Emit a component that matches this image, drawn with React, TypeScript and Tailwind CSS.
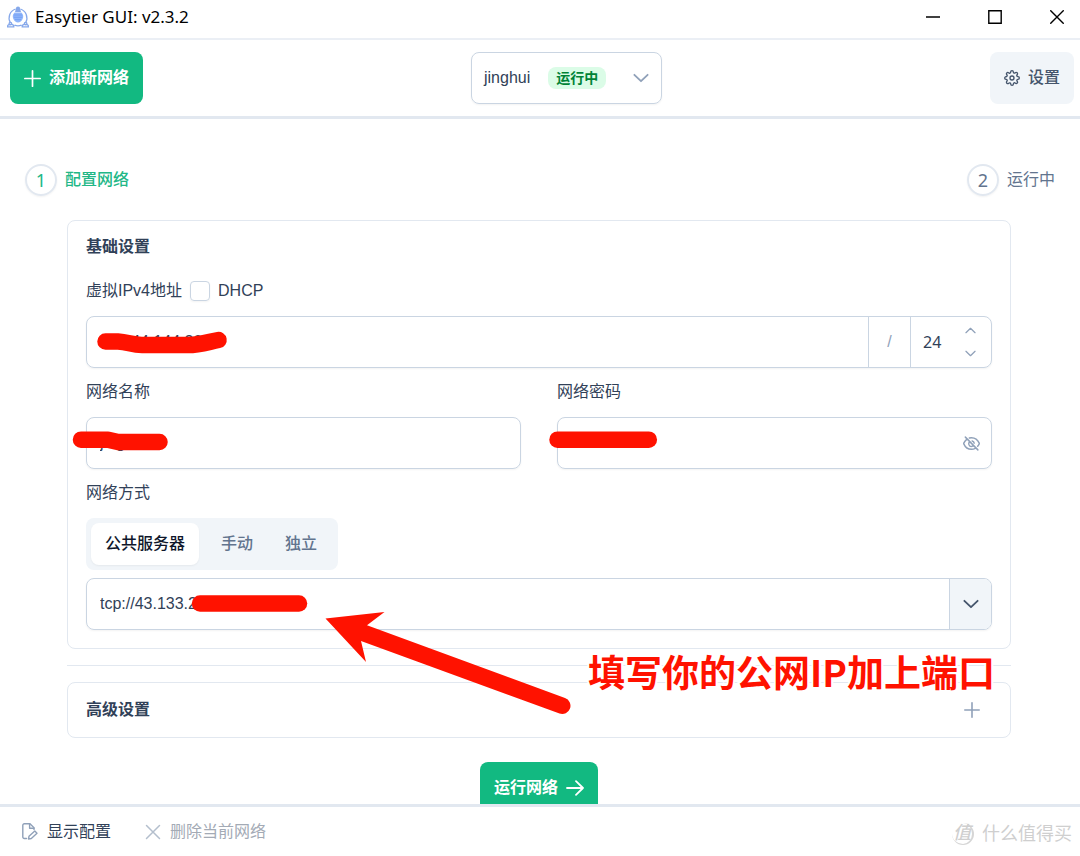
import { useState } from "react";
import type { ReactNode } from "react";
import { FiSettings } from "react-icons/fi";

type Mode = "public" | "manual" | "standalone";

const modes: { id: Mode; label: string }[] = [
  { id: "public", label: "公共服务器" },
  { id: "manual", label: "手动" },
  { id: "standalone", label: "独立" },
];

function Chevron({ className, up = false }: { className: string; up?: boolean }) {
  return (
    <svg viewBox="0 0 14 14" className={className} fill="none" stroke="currentColor" strokeWidth="1.6" strokeLinecap="round" strokeLinejoin="round">
      <path d={up ? "M1.2 9.8 7 4.2l5.8 5.6" : "M1.2 4.2 7 9.8l5.8-5.6"} />
    </svg>
  );
}

function PlusIcon({ className }: { className: string }) {
  return (
    <svg viewBox="0 0 16 16" className={className} fill="none" stroke="currentColor" strokeWidth="1.6" strokeLinecap="round">
      <path d="M8 .8v14.4M.8 8h14.4" />
    </svg>
  );
}

function EyeSlashIcon() {
  return (
    <svg viewBox="0 0 16 16" className="size-[17px]" fill="none" stroke="currentColor" strokeWidth="1.4" strokeLinecap="round" strokeLinejoin="round">
      <path d="M6 2.8c.6-.2 1.3-.3 2-.3 3.5 0 6.2 2.7 7.4 5.5-.4.9-.9 1.8-1.6 2.6M11.6 12.5c-1.1.6-2.3 1-3.6 1-3.5 0-6.200-2.700-7.400-5.500.6-1.400 1.600-2.800 2.900-3.800" />
      <path d="M2.200 2 14 14M5.600 7.200A2.500 2.500 0 0 0 9 10.500M8.600 5.600a2.500 2.500 0 0 1 1.900 2.100" />
    </svg>
  );
}

function FileEditIcon() {
  return (
    <svg viewBox="0 0 16 17" className="h-[17px] w-4" fill="none" stroke="currentColor" strokeWidth="1.4" strokeLinecap="round" strokeLinejoin="round">
      <path d="M4.500 15.500H2.300A1.500 1.500 0 0 1 .8 14V2.300A1.500 1.500 0 0 1 2.300.8H8l4 4v1.800" />
      <path d="M7.600 1v4.200H12" />
      <path d="m7 13.300 5.800-5.200 2.200 2.200-5.700 5.200-2.800.5z" />
    </svg>
  );
}

function AppLogo() {
  return (
    <svg viewBox="0 0 22 22" className="size-[22px]" fill="none" stroke="#86a8ea" strokeWidth="1.3">
      <path d="M3.300 16.500A9.400 9.400 0 0 1 8.600 3M13.400 3a9.400 9.400 0 0 1 5.300 13.500" />
      <path d="M11 .4a2 2 0 0 1 2 2.200l1 3.400H8l1-3.400A2 2 0 0 1 11 .4z" fill="#86a8ea" stroke="none" />
      <path d="M7.600 6.500h6.800a5.600 5.600 0 0 1 1.200 6.500c-1 2.200-2.600 3.400-4.600 3.600-2-.2-3.600-1.400-4.600-3.600a5.600 5.600 0 0 1 1.200-6.500z" fill="#8fb5fb" stroke="none" />
      <path d="M7 9h8M7 11.300h8M8 13.600h6" stroke="#6f9cf2" strokeWidth=".8" />
      <circle cx="3.400" cy="17.600" r="1.300" />
      <circle cx="18.600" cy="17.600" r="1.300" />
      <path d="M.5 20.800h6.300c0-1.500-1.200-2.400-2.400-2.400H2.900C1.700 18.400.5 19.300.5 20.800zM15.200 20.800h6.300c0-1.500-1.200-2.400-2.400-2.400h-1.500c-1.200 0-2.400.9-2.400 2.400zM7.500 19.200c2.300.9 4.700.9 7 0" />
    </svg>
  );
}

function Step({ index, active = false, children }: { index: number; active?: boolean; children: ReactNode }) {
  return (
    <li className={`flex items-center gap-2 ${active ? "font-medium text-[#22b787]" : "text-slate-500"}`}>
      <span className="flex size-8 items-center justify-center rounded-full border-2 border-slate-200 font-['Noto_Sans','Noto_Sans_CJK_SC',sans-serif] text-lg leading-6 font-normal shadow-xs">
        {index}
      </span>
      {children}
    </li>
  );
}

// Hand-drawn redactions and the arrow that points at the server address
function Markup() {
  return (
    <div className="pointer-events-none absolute top-0 left-0">
      <svg width="1080" height="856" viewBox="0 0 1080 856" fill="none" stroke="#ff1200" strokeWidth="16.500" strokeLinecap="round" strokeLinejoin="round">
        <path d="M105.500 341.500H118C128 342 132 345 142 345H188C200 345 208 342 218.500 340" />
        <path d="M81 439.700H108L118 442H159.500" />
        <path d="M557.500 439.700H648.800" />
        <path d="M200 603.500H299" />
        <path d="M325.500 618.500 384.500 612 367 625.200 565 698A8.200 8.200 0 0 1 559.500 713.500L361 641 366 662z" fill="#ff1200" stroke="none" />
      </svg>
      <p className="absolute top-[644px] left-[588px] font-['Noto_Sans_CJK_SC',sans-serif] text-[37px] leading-[54px] font-bold whitespace-nowrap text-[#ff1200] [-webkit-text-stroke:4px_white] [paint-order:stroke_fill]">
        填写你的公网IP加上端口
      </p>
    </div>
  );
}

export default function App() {
  const [mode, setMode] = useState<Mode>("public");
  const [dhcp, setDhcp] = useState(false);
  const [address, setAddress] = useState("10.144.144.20");
  const [mask, setMask] = useState("24");
  const [name, setName] = useState("jinghui");
  const [password, setPassword] = useState("");
  const [server, setServer] = useState("tcp://43.133.2");

  return (
    <div className="relative flex h-screen flex-col overflow-hidden bg-white font-['Liberation_Sans','Noto_Sans_CJK_SC',sans-serif] text-base text-slate-700">
      <header className="flex h-[38px] shrink-0 items-center justify-between pr-4 pb-1 pl-[7px] text-black">
        <div className="flex items-center gap-1.5">
          <AppLogo />
          <h1 className="font-['Noto_Sans',sans-serif] text-[17px] leading-6">Easytier GUI: v2.3.2</h1>
        </div>
        <div className="flex items-center gap-12">
          <button aria-label="最小化" className="flex size-[14px] items-center justify-center">
            <svg viewBox="0 0 14 14" className="size-[14px]" stroke="currentColor" strokeWidth="1.5"><path d="M0 7h14" /></svg>
          </button>
          <button aria-label="最大化" className="flex size-[14px] items-center justify-center">
            <svg viewBox="0 0 14 14" className="size-[14px]" fill="none" stroke="currentColor" strokeWidth="1.4"><path d="M.8.8h12.4v12.4H.8z" /></svg>
          </button>
          <button aria-label="关闭" className="flex size-[14px] items-center justify-center">
            <svg viewBox="0 0 14 14" className="size-[14px]" stroke="currentColor" strokeWidth="1.4"><path d="M.3.3l13.4 13.4M13.7.3.3 13.7" /></svg>
          </button>
        </div>
      </header>

      <div className="flex shrink-0 items-center justify-between border-t-2 border-b-3 border-t-[#ebeff5] border-b-slate-200 py-3 pr-[6px] pl-[10px]">
        <button className="flex h-[52px] items-center gap-2 rounded-lg bg-[#12b981] px-[14px] font-bold text-white">
          <PlusIcon className="size-[17px]" />
          添加新网络
        </button>
        <button aria-haspopup="listbox" className="flex h-[52px] w-[191px] items-center rounded-lg border border-slate-300 px-3 shadow-xs">
          <span>jinghui</span>
          <span className="ml-[18px] rounded-lg bg-green-100 px-2 text-sm leading-[22px] font-bold text-green-700">运行中</span>
          <Chevron className="ml-auto size-4 text-slate-400" />
        </button>
        <button className="flex h-[52px] items-center gap-2 rounded-lg bg-slate-100 px-[14px] font-medium text-slate-600">
          <FiSettings className="size-4" />
          设置
        </button>
      </div>

      <main className="min-h-0 flex-1 overflow-hidden px-[25px] pt-[45px]">
        <ol className="flex items-center justify-between">
          <Step index={1} active>配置网络</Step>
          <Step index={2}>运行中</Step>
        </ol>

        <div className="mt-6 mr-11 ml-[42px]">
          <section className="rounded-lg border border-slate-200 p-[18px]">
            <h2 className="h-4 leading-4 font-bold">基础设置</h2>

            <div className="mt-6 flex h-6 items-center gap-2">
              <label htmlFor="address">虚拟IPv4地址</label>
              <input
                id="dhcp"
                type="checkbox"
                checked={dhcp}
                onChange={e => setDhcp(e.target.checked)}
                className="size-5 appearance-none rounded border border-slate-300 shadow-xs checked:bg-emerald-500"
              />
              <label htmlFor="dhcp">DHCP</label>
            </div>
            <div className="mt-[13px] flex h-[52px] rounded-lg border border-slate-300 shadow-xs">
              <input id="address" value={address} onChange={e => setAddress(e.target.value)} className="min-w-0 flex-1 px-[13px] outline-none" />
              <span className="flex w-[43px] items-center justify-center border-x border-slate-300 text-slate-400">/</span>
              <input
                aria-label="子网掩码"
                value={mask}
                onChange={e => setMask(e.target.value)}
                className="w-[50px] pl-3 font-['Noto_Sans',sans-serif] outline-none"
              />
              <div className="flex w-[30px] flex-col items-start justify-center gap-3 pl-1 text-slate-400">
                <button aria-label="增加" onClick={() => setMask(String(Number(mask) + 1))}><Chevron up className="size-[11px]" /></button>
                <button aria-label="减少" onClick={() => setMask(String(Number(mask) - 1))}><Chevron className="size-[11px]" /></button>
              </div>
            </div>

            <div className="mt-3 grid grid-cols-2 gap-9">
              <div className="flex flex-col gap-[13px]">
                <label htmlFor="name" className="leading-6">网络名称</label>
                <input
                  id="name"
                  value={name}
                  onChange={e => setName(e.target.value)}
                  className="h-[52px] w-full rounded-lg border border-slate-300 px-[13px] shadow-xs outline-none"
                />
              </div>
              <div className="flex flex-col gap-[13px]">
                <label htmlFor="password" className="leading-6">网络密码</label>
                <div className="flex h-[52px] items-center rounded-lg border border-slate-300 pr-[11px] shadow-xs">
                  <input
                    id="password"
                    type="password"
                    value={password}
                    onChange={e => setPassword(e.target.value)}
                    className="min-w-0 flex-1 px-[13px] outline-none"
                  />
                  <button aria-label="显示密码" className="text-slate-400"><EyeSlashIcon /></button>
                </div>
              </div>
            </div>

            <h3 className="mt-3 leading-6">网络方式</h3>
            <div className="mt-[13px] flex h-[52px] w-fit rounded-lg bg-slate-100 p-[5px]">
              {modes.map(item => (
                <button
                  key={item.id}
                  onClick={() => setMode(item.id)}
                  className={mode === item.id ? "mr-1.5 rounded-lg bg-white px-[14px] font-medium text-slate-900 shadow-xs" : "px-4 font-medium text-slate-500"}
                >
                  {item.label}
                </button>
              ))}
            </div>
            <div className="mt-2 flex h-[52px] overflow-hidden rounded-lg border border-slate-300 shadow-xs">
              <input
                aria-label="公共服务器地址"
                value={server}
                onChange={e => setServer(e.target.value)}
                className="min-w-0 flex-1 px-[13px] outline-none"
              />
              <button aria-label="选择服务器" className="flex w-[42px] items-center justify-center border-l border-slate-300 bg-slate-100 text-slate-600">
                <Chevron className="size-4" />
              </button>
            </div>
          </section>

          <hr className="my-4 border-slate-200" />

          <section className="rounded-lg border border-slate-200">
            <h2>
              <button className="flex h-[54px] w-full items-center justify-between pr-[30px] pl-[18px] font-bold">
                高级设置
                <PlusIcon className="size-4 text-slate-400" />
              </button>
            </h2>
          </section>

          <div className="mt-6 flex justify-center">
            <button className="flex h-[52px] items-center gap-2 rounded-lg bg-[#12b981] px-[14px] font-bold text-white">
              运行网络
              <svg viewBox="0 0 18 16" className="h-4 w-[18px]" fill="none" stroke="currentColor" strokeWidth="1.8" strokeLinecap="round" strokeLinejoin="round">
                <path d="M1 8h16M10 1.200 17 8l-7 6.800" />
              </svg>
            </button>
          </div>
        </div>
      </main>

      <footer className="flex h-[52px] shrink-0 items-center border-t-3 border-slate-200 pr-2 pl-[22px]">
        <button className="flex items-center gap-[9px]">
          <span className="text-slate-400"><FileEditIcon /></span>
          显示配置
        </button>
        <button disabled className="ml-[34px] flex items-center gap-[9px] text-[#a3aab5]">
          <svg viewBox="0 0 16 16" className="size-4 text-[#b4bfcd]" stroke="currentColor" strokeWidth="1.5" strokeLinecap="round">
            <path d="m1.500 1.500 13 13M14.500 1.500l-13 13" />
          </svg>
          删除当前网络
        </button>
        <div className="ml-auto flex items-center gap-2 pt-1 text-lg leading-6 text-[#cfcfcf]">
          <span className="flex size-[22px] items-center justify-center rounded-full border-r-2 border-b border-[#d6d6d6] leading-5 font-medium italic">值</span>
          什么值得买
        </div>
      </footer>

      <Markup />
    </div>
  );
}
